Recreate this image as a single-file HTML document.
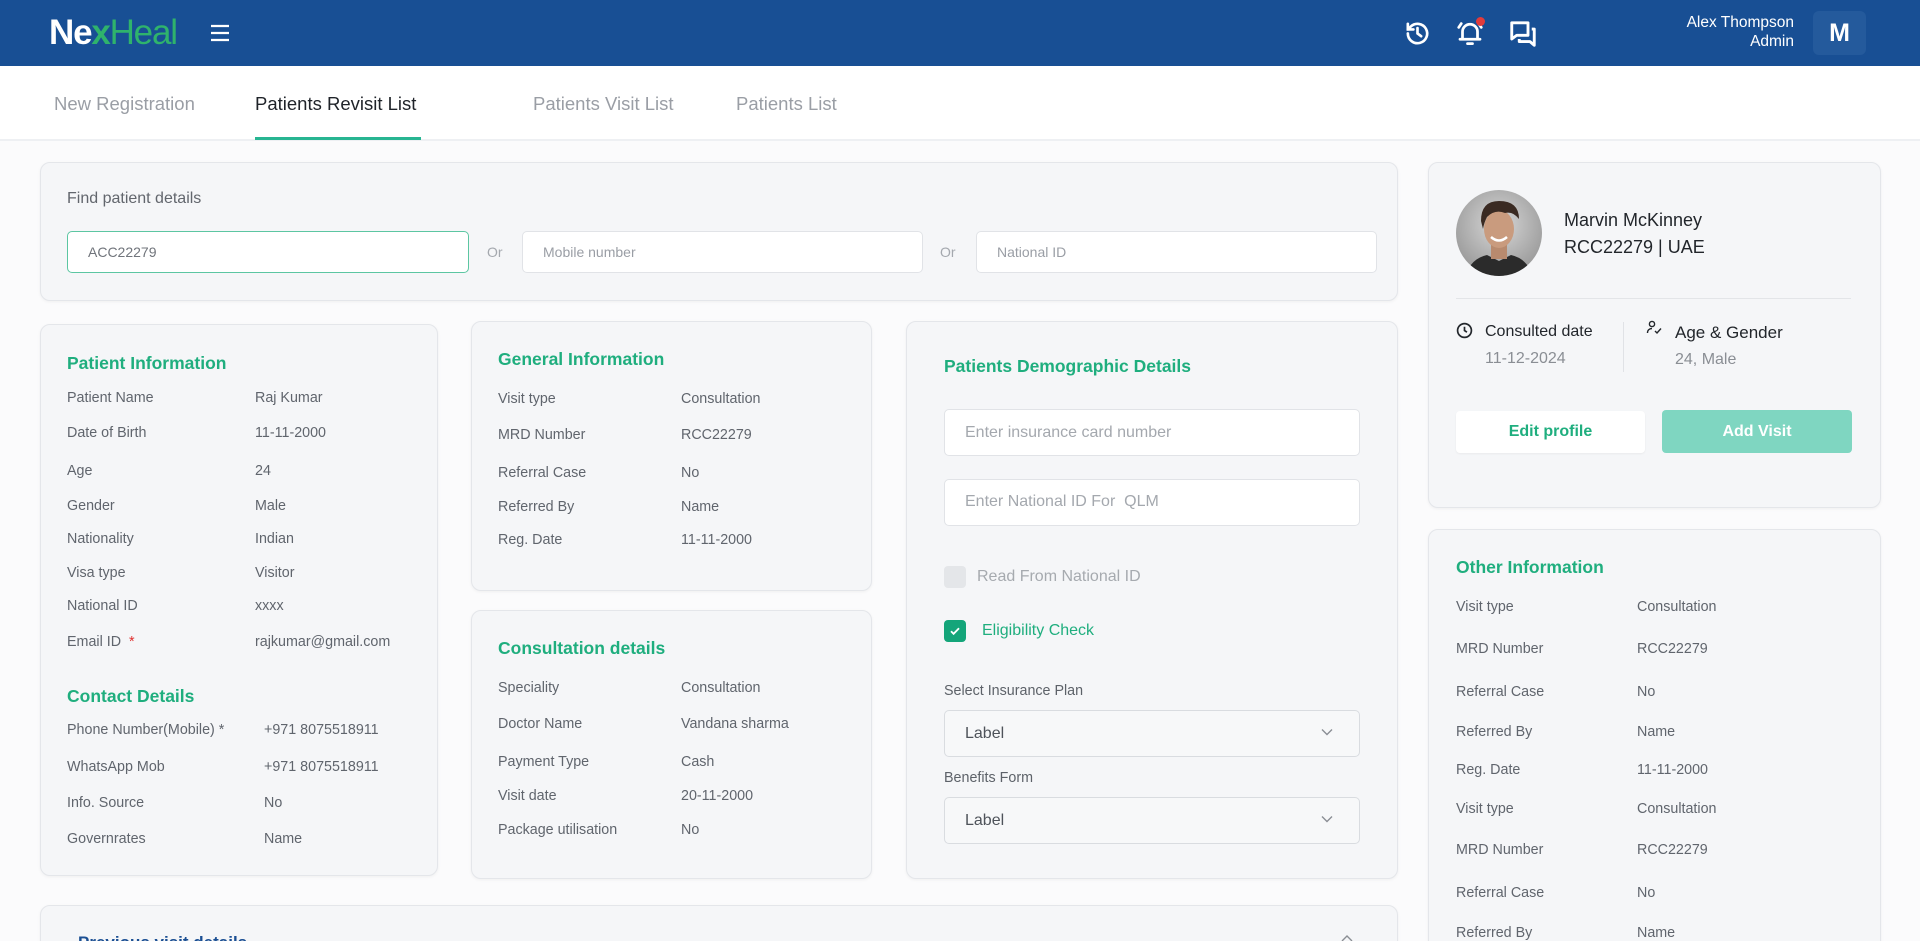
<!DOCTYPE html>
<html><head><meta charset="utf-8"><style>
*{margin:0;padding:0;box-sizing:border-box}
html{width:1920px;height:941px;overflow:hidden}
body{width:1920px;height:941px;overflow:hidden;background:#fbfbfc;font-family:"Liberation Sans",Arial,sans-serif;position:relative;color:#5b6068}
.a{position:absolute;white-space:nowrap}
.hdr{position:absolute;left:0;top:0;width:1920px;height:66px;background:#184f94}
.tabs{position:absolute;left:0;top:66px;width:1920px;height:75px;background:#fff;border-bottom:2px solid #eef0f3}
.tab{position:absolute;top:92px;font-size:18.5px;color:#9a9ea5;line-height:24px}
.card{position:absolute;background:#f5f6f8;border:1px solid #e4e6ea;border-radius:10px;box-shadow:0 1px 3px rgba(0,0,0,.05)}
.t{position:absolute;font-size:17.5px;font-weight:bold;color:#1fae7e;line-height:22px;white-space:nowrap}
.l{position:absolute;font-size:14.3px;color:#60656d;line-height:18px;white-space:nowrap}
.inp{position:absolute;background:#fff;border:1px solid #e1e3e7;border-radius:5px}
.ph{position:absolute;font-size:16px;color:#a4a8ae;line-height:20px;white-space:nowrap}
.clip{position:absolute;left:0;top:0;width:1920px;height:941px;overflow:hidden}
</style></head><body><div class="clip">
<div class="hdr"></div>
<div class="a" style="left:49px;top:13px;font-size:35px;font-weight:bold;letter-spacing:-1.2px;line-height:40px;color:#fff">Ne<span style="color:#2fb36c">x</span><span style="color:#2fb36c;font-weight:normal">Heal</span></div>
<svg class="a" style="left:210px;top:24px" width="20" height="18" viewBox="0 0 20 18"><path d="M1 2h18M1 9h18M1 16h18" stroke="#fff" stroke-width="2.2"/></svg>
<svg class="a" style="left:1403px;top:19px" width="29" height="29" viewBox="0 0 24 24" fill="none" stroke="#fff" stroke-width="2.2" stroke-linecap="round"><path d="M4 12a8 8 0 1 0 2.4-5.7L4 8.6"/><path d="M4 4v4.6h4.6"/><path d="M12 7.5V12l3 2.2"/></svg>
<svg class="a" style="left:1455px;top:18px" width="30" height="30" viewBox="0 0 24 24" fill="none" stroke="#fff" stroke-width="2.2" stroke-linecap="round"><path d="M6 17V11a6 6 0 0 1 12 0v6M4 17h16M10 20.5h4M3 7.5l2-3M21 7.5l-2-3"/></svg>
<div class="a" style="left:1476px;top:17px;width:9px;height:9px;border-radius:50%;background:#e23b3b"></div>
<svg class="a" style="left:1508px;top:19px" width="30" height="30" viewBox="0 0 24 24" fill="none" stroke="#fff" stroke-width="2.3" stroke-linejoin="round"><path d="M3 3h13v10H7l-4 3z"/><path d="M19 8h2v13l-3.5-3H9v-2"/></svg>
<div class="a" style="right:126px;top:13px;font-size:15.5px;color:#fff;line-height:19px;text-align:right">Alex Thompson<br>Admin</div>
<div class="a" style="left:1813px;top:11px;width:53px;height:44px;border-radius:6px;background:#245a9c;color:#fff;font-size:25px;font-weight:bold;text-align:center;line-height:44px">M</div>

<div class="tabs"></div>
<div class="tab" style="left:54px">New Registration</div>
<div class="tab" style="left:255px;color:#1f2329">Patients Revisit List</div>
<div class="a" style="left:255px;top:137px;width:166px;height:3px;background:#27b592"></div>
<div class="tab" style="left:533px">Patients Visit List</div>
<div class="tab" style="left:736px">Patients List</div>

<div class="card" style="left:40px;top:162px;width:1358px;height:139px"></div>
<div class="a" style="left:67px;top:189px;font-size:16px;color:#62666d;line-height:20px">Find patient details</div>
<div class="inp" style="left:67px;top:231px;width:402px;height:42px;border-color:#5cc6a2"></div>
<div class="a" style="left:88px;top:244px;font-size:14px;color:#70747b">ACC22279</div>
<div class="a" style="left:487px;top:244px;font-size:14px;color:#a4a8ae">Or</div>
<div class="inp" style="left:522px;top:231px;width:401px;height:42px"></div>
<div class="a" style="left:543px;top:244px;font-size:14px;color:#9a9ea5">Mobile number</div>
<div class="a" style="left:940px;top:244px;font-size:14px;color:#a4a8ae">Or</div>
<div class="inp" style="left:976px;top:231px;width:401px;height:42px"></div>
<div class="a" style="left:997px;top:244px;font-size:14px;color:#9a9ea5">National ID</div>

<div class="card" style="left:40px;top:324px;width:398px;height:552px"></div>
<div class="t" style="left:67px;top:352px">Patient Information</div>
<div class="l" style="left:67px;top:389px">Patient Name</div><div class="l" style="left:255px;top:389px">Raj Kumar</div>
<div class="l" style="left:67px;top:424px">Date of Birth</div><div class="l" style="left:255px;top:424px">11-11-2000</div>
<div class="l" style="left:67px;top:462px">Age</div><div class="l" style="left:255px;top:462px">24</div>
<div class="l" style="left:67px;top:497px">Gender</div><div class="l" style="left:255px;top:497px">Male</div>
<div class="l" style="left:67px;top:530px">Nationality</div><div class="l" style="left:255px;top:530px">Indian</div>
<div class="l" style="left:67px;top:564px">Visa type</div><div class="l" style="left:255px;top:564px">Visitor</div>
<div class="l" style="left:67px;top:597px">National ID</div><div class="l" style="left:255px;top:597px">xxxx</div>
<div class="l" style="left:67px;top:633px">Email ID &nbsp;<span style="color:#e0302f">*</span></div><div class="l" style="left:255px;top:633px">rajkumar@gmail.com</div>
<div class="t" style="left:67px;top:685px">Contact Details</div>
<div class="l" style="left:67px;top:721px">Phone Number(Mobile) *</div><div class="l" style="left:264px;top:721px">+971 8075518911</div>
<div class="l" style="left:67px;top:758px">WhatsApp Mob</div><div class="l" style="left:264px;top:758px">+971 8075518911</div>
<div class="l" style="left:67px;top:794px">Info. Source</div><div class="l" style="left:264px;top:794px">No</div>
<div class="l" style="left:67px;top:830px">Governrates</div><div class="l" style="left:264px;top:830px">Name</div>

<div class="card" style="left:471px;top:321px;width:401px;height:270px"></div>
<div class="t" style="left:498px;top:348px">General Information</div>
<div class="l" style="left:498px;top:390px">Visit type</div><div class="l" style="left:681px;top:390px">Consultation</div>
<div class="l" style="left:498px;top:426px">MRD Number</div><div class="l" style="left:681px;top:426px">RCC22279</div>
<div class="l" style="left:498px;top:464px">Referral Case</div><div class="l" style="left:681px;top:464px">No</div>
<div class="l" style="left:498px;top:498px">Referred By</div><div class="l" style="left:681px;top:498px">Name</div>
<div class="l" style="left:498px;top:531px">Reg. Date</div><div class="l" style="left:681px;top:531px">11-11-2000</div>

<div class="card" style="left:471px;top:610px;width:401px;height:269px"></div>
<div class="t" style="left:498px;top:637px">Consultation details</div>
<div class="l" style="left:498px;top:679px">Speciality</div><div class="l" style="left:681px;top:679px">Consultation</div>
<div class="l" style="left:498px;top:715px">Doctor Name</div><div class="l" style="left:681px;top:715px">Vandana sharma</div>
<div class="l" style="left:498px;top:753px">Payment Type</div><div class="l" style="left:681px;top:753px">Cash</div>
<div class="l" style="left:498px;top:787px">Visit date</div><div class="l" style="left:681px;top:787px">20-11-2000</div>
<div class="l" style="left:498px;top:821px">Package utilisation</div><div class="l" style="left:681px;top:821px">No</div>

<div class="card" style="left:906px;top:321px;width:492px;height:558px"></div>
<div class="t" style="left:944px;top:355px">Patients Demographic Details</div>
<div class="inp" style="left:944px;top:409px;width:416px;height:47px"></div>
<div class="ph" style="left:965px;top:423px">Enter insurance card number</div>
<div class="inp" style="left:944px;top:479px;width:416px;height:47px"></div>
<div class="ph" style="left:965px;top:492px">Enter National ID For &nbsp;QLM</div>
<div class="a" style="left:944px;top:566px;width:22px;height:22px;border-radius:4px;background:#e4e6e9"></div>
<div class="ph" style="left:977px;top:567px;color:#a6aaaf">Read From National ID</div>
<div class="a" style="left:944px;top:620px;width:22px;height:22px;border-radius:4px;background:#14a57a"></div>
<svg class="a" style="left:948px;top:624px" width="14" height="14" viewBox="0 0 14 14"><path d="M3 7.2l2.6 2.6L11 4.2" stroke="#fff" stroke-width="1.8" fill="none"/></svg>
<div class="ph" style="left:982px;top:621px;color:#1fae7e">Eligibility Check</div>
<div class="l" style="left:944px;top:682px;color:#5d6269">Select Insurance Plan</div>
<div class="inp" style="left:944px;top:710px;width:416px;height:47px;background:#f7f8f9;border-color:#d9dce0"></div>
<div class="ph" style="left:965px;top:724px;color:#4e535a">Label</div>
<svg class="a" style="left:1320px;top:727px" width="14" height="10" viewBox="0 0 14 10"><path d="M2 2.5l5 5 5-5" stroke="#8a8e94" stroke-width="1.4" fill="none"/></svg>
<div class="l" style="left:944px;top:769px;color:#5d6269">Benefits Form</div>
<div class="inp" style="left:944px;top:797px;width:416px;height:47px;background:#f7f8f9;border-color:#d9dce0"></div>
<div class="ph" style="left:965px;top:811px;color:#4e535a">Label</div>
<svg class="a" style="left:1320px;top:814px" width="14" height="10" viewBox="0 0 14 10"><path d="M2 2.5l5 5 5-5" stroke="#8a8e94" stroke-width="1.4" fill="none"/></svg>

<div class="card" style="left:40px;top:905px;width:1358px;height:60px"></div>
<div class="a" style="left:78px;top:933px;font-size:17px;font-weight:bold;color:#1b4f93;line-height:20px">Previous visit details</div>
<svg class="a" style="left:1340px;top:934px" width="14" height="7" viewBox="0 0 14 7"><path d="M2 7l5-5 5 5" stroke="#8a8e94" stroke-width="1.4" fill="none"/></svg>

<div class="card" style="left:1428px;top:162px;width:453px;height:346px"></div>
<svg class="a" style="left:1455px;top:189px" width="88" height="88" viewBox="0 0 88 88"><defs><radialGradient id="g" cx=".5" cy=".4" r=".6"><stop offset="0" stop-color="#d8d8d8"/><stop offset="1" stop-color="#9a9a9a"/></radialGradient><clipPath id="c"><circle cx="44" cy="44" r="43"/></clipPath></defs><circle cx="44" cy="44" r="43" fill="url(#g)"/><g clip-path="url(#c)"><path d="M10 90 Q14 70 32 66 L44 72 L56 66 Q74 70 78 90z" fill="#2b2b2b"/><rect x="36" y="52" width="16" height="18" fill="#b88a6e"/><ellipse cx="44" cy="40" rx="15" ry="19" fill="#c99b7e"/><path d="M26 32 Q26 12 44 12 Q64 12 64 30 Q58 22 50 24 Q40 20 32 28 Q29 34 28 40z" fill="#3a2a22"/><path d="M36 48 Q44 55 52 48" stroke="#fff" stroke-width="2.5" fill="none"/></g></svg>
<div class="a" style="left:1564px;top:209px;font-size:18px;color:#22262b;line-height:22px">Marvin McKinney</div>
<div class="a" style="left:1564px;top:236px;font-size:18px;color:#22262b;line-height:22px">RCC22279 | UAE</div>
<div class="a" style="left:1456px;top:298px;width:395px;height:1px;background:#e3e5e8"></div>
<svg class="a" style="left:1456px;top:322px" width="17" height="17" viewBox="0 0 16 16" fill="none" stroke="#23272c" stroke-width="1.6"><circle cx="8" cy="8" r="6.5"/><path d="M8 4.5V8l2.3 1.6"/></svg>
<div class="a" style="left:1485px;top:322px;font-size:16px;color:#22262b;line-height:20px">Consulted date</div>
<div class="a" style="left:1485px;top:349px;font-size:16px;color:#8a8e94;line-height:20px">11-12-2024</div>
<div class="a" style="left:1623px;top:322px;width:1px;height:50px;background:#e0e2e6"></div>
<svg class="a" style="left:1646px;top:320px" width="17" height="15" viewBox="0 0 17 15" fill="none" stroke="#23272c" stroke-width="1.4"><circle cx="6" cy="4" r="2.6"/><path d="M1.5 13c0-3 2-4.5 4.5-4.5M9 11l2 2 4-4.5"/></svg>
<div class="a" style="left:1675px;top:323px;font-size:17px;color:#22262b;line-height:20px">Age &amp; Gender</div>
<div class="a" style="left:1675px;top:350px;font-size:16px;color:#8a8e94;line-height:20px">24, Male</div>
<div class="a" style="left:1456px;top:411px;width:189px;height:42px;background:#fff;border-radius:4px;box-shadow:0 1px 2px rgba(0,0,0,.05);text-align:center;line-height:42px;font-size:16px;font-weight:bold;color:#1fae7e">Edit profile</div>
<div class="a" style="left:1662px;top:410px;width:190px;height:43px;background:#7fd6c1;border-radius:4px;text-align:center;line-height:43px;font-size:16px;font-weight:bold;color:#fff">Add Visit</div>

<div class="card" style="left:1428px;top:529px;width:453px;height:430px"></div>
<div class="t" style="left:1456px;top:556px">Other Information</div>
<div class="l" style="left:1456px;top:598px">Visit type</div><div class="l" style="left:1637px;top:598px">Consultation</div>
<div class="l" style="left:1456px;top:640px">MRD Number</div><div class="l" style="left:1637px;top:640px">RCC22279</div>
<div class="l" style="left:1456px;top:683px">Referral Case</div><div class="l" style="left:1637px;top:683px">No</div>
<div class="l" style="left:1456px;top:723px">Referred By</div><div class="l" style="left:1637px;top:723px">Name</div>
<div class="l" style="left:1456px;top:761px">Reg. Date</div><div class="l" style="left:1637px;top:761px">11-11-2000</div>
<div class="l" style="left:1456px;top:800px">Visit type</div><div class="l" style="left:1637px;top:800px">Consultation</div>
<div class="l" style="left:1456px;top:841px">MRD Number</div><div class="l" style="left:1637px;top:841px">RCC22279</div>
<div class="l" style="left:1456px;top:884px">Referral Case</div><div class="l" style="left:1637px;top:884px">No</div>
<div class="l" style="left:1456px;top:924px">Referred By</div><div class="l" style="left:1637px;top:924px">Name</div>
</div></body></html>
